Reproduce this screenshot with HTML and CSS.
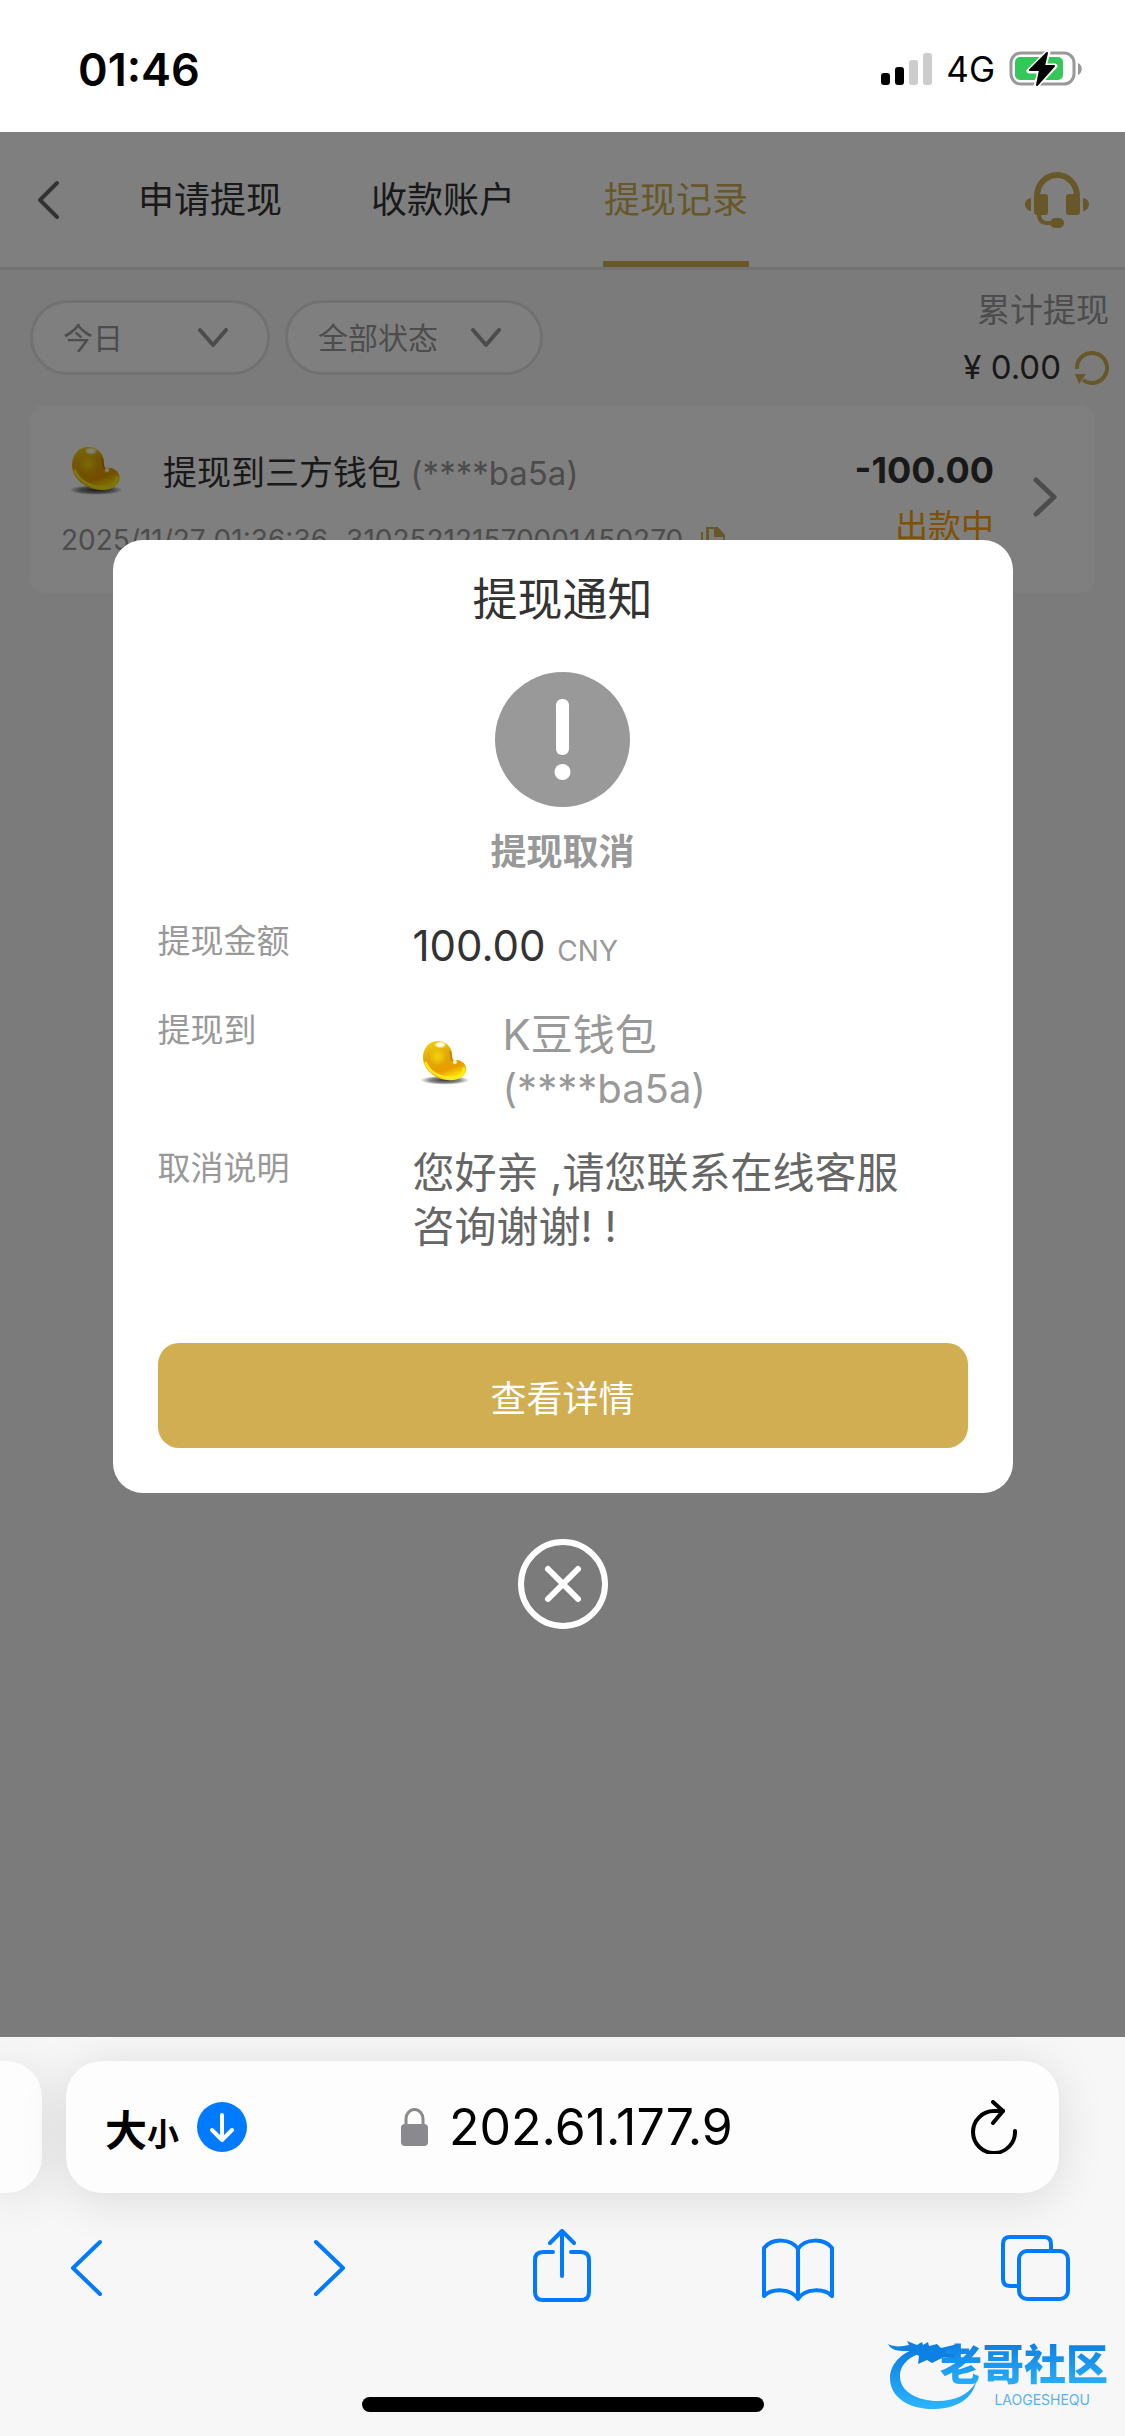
FILE: index.html
```html
<!DOCTYPE html>
<html lang="zh-CN">
<head>
    <meta charset="UTF-8">
    <meta name="viewport" content="width=device-width, initial-scale=1.0">
    <title>提现记录</title>
    <link rel="stylesheet" href="styles.css">
</head>
<body>

    <!-- shared bean icon -->
    <svg class="sprite" aria-hidden="true">
        <defs>
            <linearGradient id="beanFill" x1="0.2" y1="0" x2="0.6" y2="1">
                <stop offset="0" stop-color="#f2cf10"/>
                <stop offset="0.35" stop-color="#e2a908"/>
                <stop offset="0.75" stop-color="#e89c00"/>
                <stop offset="1" stop-color="#fff000"/>
            </linearGradient>
            <radialGradient id="beanGlow">
                <stop offset="0" stop-color="#f5d60f"/>
                <stop offset="1" stop-color="#f5d60f" stop-opacity="0"/>
            </radialGradient>
            <radialGradient id="beanShine">
                <stop offset="0" stop-color="#fff"/>
                <stop offset="0.5" stop-color="#fffbd0"/>
                <stop offset="1" stop-color="#fff6a0" stop-opacity="0"/>
            </radialGradient>
            <radialGradient id="beanShadow">
                <stop offset="0" stop-color="#222" stop-opacity="0.9"/>
                <stop offset="0.6" stop-color="#333" stop-opacity="0.6"/>
                <stop offset="1" stop-color="#333" stop-opacity="0"/>
            </radialGradient>
        </defs>
        <symbol id="bean" viewBox="0 0 66 66">
            <ellipse cx="35" cy="53" rx="27" ry="5" fill="url(#beanShadow)"/>
            <path d="M27 10C17 10 11 19 11 28c0 14 15 25 30 25 11 0 19-6 17.500-14C57 33 51 30 45 31c-1.500-1-2-2-2-6C42.500 16 36 10 27 10z" fill="url(#beanFill)"/>
            <path d="M14 34c4 10 15 16 27 16.500 9 0 15-4 15-10" fill="none" stroke="#ffe81c" stroke-width="3" stroke-linecap="round"/>
            <path d="M41 21c1 8 1 11 5 13" fill="none" stroke="#c98400" stroke-width="2"/>
            <circle cx="27" cy="27" r="10" fill="url(#beanGlow)"/>
            <ellipse cx="30" cy="14" rx="7" ry="4" fill="url(#beanShine)"/>
            <circle cx="46" cy="33" r="3" fill="url(#beanShine)"/>
        </symbol>
    </svg>

    <div class="phone">
        <div class="status-bar">
            <span class="clock">01:46</span>
            <div class="status-icons">
                <svg class="signal" viewBox="0 0 51 34">
                    <rect x="0" y="21" width="9" height="12" rx="3"/>
                    <rect x="14" y="15" width="9" height="18" rx="3"/>
                    <rect x="28" y="8" width="9" height="25" rx="3" fill="#ccc"/>
                    <rect x="42" y="1" width="9" height="32" rx="3" fill="#ccc"/>
                </svg>
                <span class="network">4G</span>
                <svg class="battery" viewBox="0 0 74 36">
                    <rect x="2" y="2" width="63" height="31" rx="10" fill="none" stroke="#999" stroke-width="3"/>
                    <path d="M69 12c5 2 5 10 0 12z" fill="#999"/>
                    <rect x="6" y="6" width="48" height="23" rx="5" fill="#34c759"/>
                    <path d="M39 1 20 20h11L27 35 46 15H35z" fill="#000" stroke="#fff" stroke-width="5" stroke-linejoin="round"/>
                    <path d="M38 2 21 19h10L28 34 45 15H35z" stroke="#000" stroke-width="2" stroke-linejoin="round"/>
                </svg>
            </div>
        </div>

        <main class="page">
            <header class="top-nav">
                <button class="back" aria-label="返回">
                    <svg viewBox="0 0 24 40"><path d="M21 3 4 20l17 17" fill="none" stroke="#666" stroke-width="4" stroke-linecap="round" stroke-linejoin="round"/></svg>
                </button>
                <nav class="tabs">
                    <a href="#">申请提现</a>
                    <a href="#">收款账户</a>
                    <a href="#" class="active">提现记录</a>
                </nav>
                <button class="service" aria-label="客服">
                    <svg viewBox="0 0 64 56" fill="#d0ae51">
                        <path d="M9 24a23 24 0 0 1 46 0h-6a17 18 0 0 0-34 0z"/>
                        <rect x="9" y="22" width="14" height="21" rx="3"/>
                        <rect x="41" y="22" width="14" height="21" rx="3"/>
                        <path d="M6 26v13C-2 38-2 27 6 26zM58 26v13c8-1 8-12 0-13z"/>
                        <path d="M14 42c0 6 3 9 8 9h6" fill="none" stroke="#d0ae51" stroke-width="4"/>
                        <rect x="25" y="46" width="14" height="10" rx="5"/>
                    </svg>
                </button>
            </header>

            <div class="filters">
                <label class="filter">
                    <select aria-label="日期"><option>今日</option></select>
                    <svg viewBox="0 0 30 20"><path d="M2 2l13 15L28 2" fill="none" stroke="#999" stroke-width="4" stroke-linecap="round" stroke-linejoin="round"/></svg>
                </label>
                <label class="filter filter-wide">
                    <select aria-label="状态"><option>全部状态</option></select>
                    <svg viewBox="0 0 30 20"><path d="M2 2l13 15L28 2" fill="none" stroke="#999" stroke-width="4" stroke-linecap="round" stroke-linejoin="round"/></svg>
                </label>
                <div class="total">
                    <div class="total-label">累计提现</div>
                    <div class="total-value">
                        <span>¥ 0.00</span>
                        <button aria-label="刷新">
                            <svg viewBox="0 0 34 34"><path d="M2 18A15 15 0 1 1 8 29" fill="none" stroke="#d0ae51" stroke-width="4"/><path d="M0 23h11l-7 10z" fill="#d0ae51"/></svg>
                        </button>
                    </div>
                </div>
            </div>

            <article class="record">
                <div class="record-info">
                    <div class="record-title">
                        <svg class="record-icon"><use href="#bean"/></svg>
                        <span>提现到三方钱包 <span class="muted">(****ba5a)</span></span>
                    </div>
                    <div class="record-meta">
                        <span>2025/11/27 01:36:36</span>
                        <span>310252121570001450270</span>
                        <button aria-label="复制">
                            <svg viewBox="0 0 24 26" fill="#d0ae51"><path d="M5 0h12l7 8v13H5z"/><path d="M8 2h5v8h9v9H8z" fill="#fff" fill-opacity=".9"/><path d="M0 5h2v19h16v2H0z"/></svg>
                        </button>
                    </div>
                </div>
                <div class="record-amount">
                    <strong>-100.00</strong>
                    <span>出款中</span>
                </div>
                <svg class="record-arrow" viewBox="0 0 24 40"><path d="M3 3l18 17L3 37" fill="none" stroke="#999" stroke-width="5" stroke-linecap="round" stroke-linejoin="round"/></svg>
            </article>

            <div class="overlay">
                <section class="modal" role="dialog" aria-labelledby="modalTitle">
                    <h2 id="modalTitle">提现通知</h2>
                    <svg class="modal-icon" viewBox="0 0 135 135">
                        <circle cx="67.500" cy="67.500" r="67.500" fill="#999"/>
                        <rect x="61" y="27" width="13" height="56" rx="6" fill="#fff"/>
                        <circle cx="67.500" cy="100" r="8" fill="#fff"/>
                    </svg>
                    <p class="modal-status">提现取消</p>
                    <dl class="details">
                        <dt>提现金额</dt>
                        <dd class="dark">100.00 <small>CNY</small></dd>
                        <dt>提现到</dt>
                        <dd class="wallet">
                            <svg class="wallet-icon"><use href="#bean"/></svg>
                            <div>K豆钱包<div class="wallet-id">(****ba5a)</div></div>
                        </dd>
                        <dt>取消说明</dt>
                        <dd class="reason">您好亲 ,请您联系在线客服咨询谢谢! !</dd>
                    </dl>
                    <button class="primary">查看详情</button>
                </section>
                <button class="close" aria-label="关闭">
                    <svg viewBox="0 0 90 90" fill="none" stroke="#fff" stroke-width="6" stroke-linecap="round"><circle cx="45" cy="45" r="42"/><path d="M30 30l30 30M60 30L30 60"/></svg>
                </button>
            </div>
        </main>

        <footer class="browser">
            <div class="address-row">
                <div class="peek"></div>
                <div class="address">
                    <div class="address-left">
                        <button class="text-size" aria-label="文字大小"><span>大</span><small>小</small></button>
                        <button aria-label="下载">
                            <svg class="download" viewBox="0 0 50 50"><circle cx="25" cy="25" r="25" fill="#007aff"/><path d="M25 13v24M15 28l10 10 10-10" fill="none" stroke="#fff" stroke-width="4" stroke-linecap="round" stroke-linejoin="round"/></svg>
                        </button>
                    </div>
                    <div class="address-url">
                        <svg class="lock" viewBox="0 0 27 38"><rect y="16" width="27" height="22" rx="4" fill="#8a8a8e"/><path d="M5 17v-6a8 9 0 0 1 17 0v6" fill="none" stroke="#8a8a8e" stroke-width="3"/></svg>
                        <input type="text" value="202.61.177.9" aria-label="网址">
                    </div>
                    <button class="reload" aria-label="重新载入">
                        <svg viewBox="0 0 46 54" fill="none" stroke="#000" stroke-width="4" stroke-linecap="round" stroke-linejoin="round"><path d="M44 31A21 21 0 1 1 23 11h9"/><path d="M22 2l10 9-10 12"/></svg>
                    </button>
                </div>
            </div>
            <nav class="toolbar">
                <button aria-label="后退"><svg viewBox="0 0 72 74"><path d="M50 13L23 39l27 26"/></svg></button>
                <button aria-label="前进"><svg viewBox="0 0 72 74"><path d="M29 13l27 26-27 26"/></svg></button>
                <button aria-label="分享"><svg viewBox="0 0 72 74"><path d="M28 23H18q-8 0-8 8v32q0 8 8 8h38q8 0 8-8V31q0-8-8-8H46M37 47V3M25 14L37 2l12 12"/></svg></button>
                <button aria-label="书签"><svg viewBox="0 0 72 74"><path d="M36 20C29 9 10 9 2 19v48c8-8 27-8 34 3 7-11 26-11 34-3V19C62 9 43 9 36 20zM36 20v49"/></svg></button>
                <button aria-label="标签页"><svg viewBox="0 0 72 74"><path d="M52 20v-5q0-7-7-7H11q-7 0-7 7v35q0 7 7 7h7"/><rect x="20" y="22" width="49" height="48" rx="8"/></svg></button>
            </nav>
            <div class="home-indicator"></div>
            <div class="community">
                <svg viewBox="0 0 93 80">
                    <defs>
                        <linearGradient id="logoBlue" x1="0" y1="0" x2="0" y2="1">
                            <stop offset="0" stop-color="#0a7be0"/>
                            <stop offset="1" stop-color="#2cb5fd"/>
                        </linearGradient>
                    </defs>
                    <path d="M38 15C17 17 3 31 3 46c0 20 20 32 46 31 19-1 36-9 40-27-7 13-22 19-38 19-20 0-38-9-38-25 0-12 11-22 28-24z" fill="url(#logoBlue)"/>
                    <path d="M1 12c8 4 14 2 21 1l-2-4 10 4 5-3 1 3 5-3 1 4 8-2 4 4 17-4c2 2 1 5-2 6l-10 1 12 3-2 5-12-2-12 6-5-3-9 4 1-8-8-5c-9 0-19 1-23-7z" fill="#0d80e3"/>
                </svg>
                <div class="community-text">
                    <b>老哥社区</b>
                    <small>LAOGESHEQU</small>
                </div>
            </div>
        </footer>
    </div>

</body>
</html>
```
FILE: styles.css
```css
* {
    box-sizing: border-box;
}

body {
    margin: 0;
    font-family: Inter, "Noto Sans CJK SC", sans-serif;
    color: #333;
    background-color: #f7f7f7;
}

button {
    padding: 0;
    border: none;
    background: none;
    font: inherit;
    color: inherit;
}

svg {
    display: block;
}

.sprite {
    position: absolute;
    width: 0;
    height: 0;
}

.phone {
    display: flex;
    flex-direction: column;
    min-height: 100vh;
}

/* status bar */
.status-bar {
    display: flex;
    justify-content: space-between;
    align-items: center;
    height: 132px;
    padding: 6px 42px 0 78px;
    background-color: #fff;
    color: #000;
}

.clock {
    font-size: 45px;
    font-weight: 600;
}

.status-icons {
    display: flex;
    align-items: center;
    gap: 14px;
}

.signal {
    width: 51px;
    height: 34px;
}

.network {
    font-size: 35px;
}

.battery {
    width: 74px;
    height: 36px;
}

/* page */
.page {
    position: relative;
    flex: 1;
    background-color: #f6f6f6;
}

.top-nav {
    display: flex;
    align-items: center;
    height: 138px;
    padding: 0 36px;
    background-color: #fff;
    border-bottom: 3px solid #e5e5e5;
}

.back svg {
    width: 24px;
    height: 40px;
}

.tabs {
    display: flex;
    flex: 1;
    align-self: stretch;
    gap: 87px;
    margin-left: 77px;
}

.tabs a {
    padding: 0 1px;
    border-bottom: 6px solid transparent;
    font-size: 36px;
    line-height: 136px;
    height: 135px;
    color: #333;
    text-decoration: none;
}

.tabs .active {
    color: #d0ae51;
    border-color: #d0ae51;
}

.service svg {
    width: 64px;
    height: 56px;
}

.filters {
    display: flex;
    align-items: center;
    gap: 15px;
    height: 135px;
    padding: 0 16px 0 30px;
}

.filter {
    display: flex;
    align-items: center;
    width: 240px;
    height: 75px;
    padding: 0 39px 0 30px;
    border: 3px solid #e3e3e3;
    border-radius: 38px;
    background-color: #fff;
}

.filter-wide {
    width: 258px;
}

.filter select {
    flex: 1;
    min-width: 0;
    padding: 0;
    border: none;
    appearance: none;
    background: none;
    font: inherit;
    font-size: 30px;
    color: #999;
}

.filter svg {
    width: 30px;
    height: 20px;
}

.total {
    margin-left: auto;
    padding-top: 3px;
    font-size: 33px;
    line-height: 57px;
    text-align: right;
}

.total-label {
    color: #999;
}

.total-value {
    display: flex;
    justify-content: flex-end;
    align-items: center;
    gap: 14px;
}

.total-value svg {
    width: 34px;
    height: 34px;
}

.record {
    display: flex;
    align-items: center;
    margin: 0 30px;
    padding: 32px 38px 16px 31px;
    border-radius: 15px;
    background-color: #fff;
}

.record-info {
    flex: 1;
}

.record-title {
    display: flex;
    align-items: center;
    gap: 36px;
    height: 66px;
    font-size: 34px;
}

.record-icon {
    width: 66px;
    height: 66px;
}

.muted {
    font-size: 33px;
    color: #999;
}

.record-meta {
    display: flex;
    align-items: center;
    gap: 18px;
    font-size: 28px;
    line-height: 74px;
    color: #999;
}

.record-meta svg {
    width: 24px;
    height: 26px;
}

.record-amount {
    display: flex;
    flex-direction: column;
    align-items: flex-end;
    margin-right: 39px;
    padding-bottom: 18px;
    font-size: 33px;
    line-height: 56px;
    color: #ffa200;
}

.record-amount strong {
    font-size: 36px;
    color: #333;
}

.record-arrow {
    width: 24px;
    height: 40px;
    margin-bottom: 20px;
}

/* dialog */
.overlay {
    position: absolute;
    inset: 0;
    display: flex;
    flex-direction: column;
    justify-content: center;
    align-items: center;
    gap: 46px;
    background-color: rgba(0, 0, 0, 0.5);
}

.modal {
    display: flex;
    flex-direction: column;
    align-items: center;
    width: 80%;
    padding: 30px 45px 45px;
    border-radius: 30px;
    background-color: #fff;
}

.modal h2 {
    margin: 0;
    font-size: 45px;
    font-weight: 400;
    line-height: 60px;
}

.modal-icon {
    width: 135px;
    height: 135px;
    margin-top: 42px;
}

.modal-status {
    margin: 18px 0 40px;
    font-size: 36px;
    font-weight: 700;
    line-height: 54px;
    color: #999;
}

.details {
    display: grid;
    grid-template-columns: 255px 1fr;
    row-gap: 30px;
    width: 100%;
    margin: 0 0 89px;
}

.details dt {
    font-size: 33px;
    line-height: 44px;
    color: #999;
}

.details dd {
    margin: 0;
    font-size: 42px;
    line-height: 54px;
    color: #666;
}

.details .dark {
    color: #333;
}

.details small {
    font-size: 28px;
    color: #999;
}

.details .wallet {
    display: flex;
    align-items: center;
    gap: 30px;
    color: #999;
}

.wallet-icon {
    width: 60px;
    height: 60px;
}

.wallet-id {
    font-size: 40px;
}

.details .reason {
    padding-right: 45px;
}

.primary {
    width: 100%;
    height: 105px;
    border-radius: 21px;
    background-color: #d0ae51;
    font-size: 36px;
    color: #fff;
}

.close svg {
    width: 90px;
    height: 90px;
}

/* browser controls */
.browser {
    position: relative;
    overflow: hidden;
    padding: 24px 0;
    background-color: #f7f7f7;
}

.address-row {
    display: flex;
    gap: 24px;
    padding-right: 66px;
}

.peek,
.address {
    height: 132px;
    border-radius: 36px;
    background-color: #fdfdfd;
    box-shadow: 0 6px 48px rgba(0, 0, 0, 0.12);
}

.peek {
    width: 42px;
    border-radius: 0 36px 36px 0;
}

.address {
    display: grid;
    grid-template-columns: 1fr auto 1fr;
    align-items: center;
    flex: 1;
    padding: 0 42px 0 39px;
    color: #000;
}

.address-left {
    display: flex;
    align-items: center;
    gap: 18px;
}

.text-size {
    font-size: 42px;
    font-weight: 700;
}

.text-size small {
    font-size: 32px;
}

.download {
    width: 50px;
    height: 50px;
}

.address-url {
    display: flex;
    align-items: center;
    gap: 21px;
    margin-left: 10px;
}

.lock {
    width: 27px;
    height: 38px;
}

.address input {
    width: 282px;
    padding: 0;
    border: none;
    background: none;
    font: inherit;
    font-size: 50px;
    color: #000;
}

.reload {
    justify-self: end;
}

.reload svg {
    width: 46px;
    height: 54px;
}

.toolbar {
    display: flex;
    justify-content: space-between;
    margin-top: 36px;
    padding: 0 54px 0 50px;
}

.toolbar svg {
    width: 72px;
    height: 74px;
    fill: none;
    stroke: #007aff;
    stroke-width: 4px;
    stroke-linecap: round;
    stroke-linejoin: round;
}

.home-indicator {
    width: 402px;
    height: 15px;
    margin: 94px auto 0;
    border-radius: 8px;
    background-color: #000;
}

/* community watermark */
.community {
    position: absolute;
    right: 17px;
    bottom: 24px;
    width: 221px;
    height: 80px;
}

.community svg {
    width: 93px;
    height: 80px;
}

.community-text {
    position: absolute;
    right: 0;
    bottom: 3px;
    display: flex;
    flex-direction: column;
    align-items: center;
}

.community b {
    font-size: 42px;
    font-weight: 900;
    line-height: 52px;
    background: linear-gradient(#0a7be0, #2cb5fd);
    background-clip: text;
    color: transparent;
}

.community small {
    align-self: flex-end;
    margin-right: 18px;
    font-size: 14px;
    line-height: 18px;
    color: #58b2f3;
}
```
